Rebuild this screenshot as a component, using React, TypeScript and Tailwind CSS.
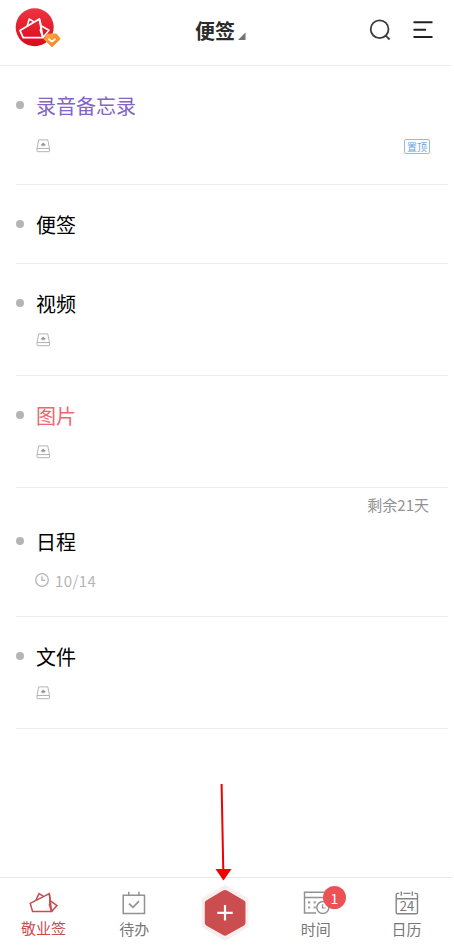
import React from "react";

function DiskIcon() {
  return (
    <svg width="15" height="14" viewBox="0 0 15 14" fill="none" stroke="#b4b4b4" strokeWidth="1">
      <path d="M2.7 .9H11.8L13.5 9.6V11.9Q13.5 12.7 12.7 12.7H1.8Q1 12.7 1 11.9V9.6Z" strokeLinejoin="round" />
      <path d="M1 9.5H13.5" />
      <path d="M7.2 3.4L10 6.2H4.4Z" fill="#999" stroke="none" />
      <path d="M5.8 6H8.6V7.2H5.8Z" fill="#a8a8a8" stroke="none" />
    </svg>
  );
}

function Avatar() {
  return (
    <svg width="48" height="42" viewBox="0 0 48 42" fill="none">
      <defs>
        <linearGradient id="red" x1="0" y1="0" x2="0" y2="1">
          <stop offset="0" stopColor="#ee3440" />
          <stop offset="1" stopColor="#d90a1c" />
        </linearGradient>
        <linearGradient id="gold" x1="0" y1="0" x2="1" y2="1">
          <stop offset="0" stopColor="#ffae3c" />
          <stop offset="1" stopColor="#f47b20" />
        </linearGradient>
      </defs>
      <circle cx="19.7" cy="19.3" r="19" fill="url(#red)" />
      <path d="M5 22.6L24.3 11L28 29.6H8.2Z" stroke="#fff" strokeWidth="1.8" strokeLinejoin="round" />
      <path d="M12.2 18L14.2 11L19 13.9M24.3 11Q26.8 17 25.4 22.5L28 29.6M26.5 18L34 22.3L28 29.6" stroke="#fff" strokeWidth="1.6" strokeLinejoin="round" />
      <path d="M32.5 26H41.5L45.2 31L37 38.8L28.8 31Z" fill="url(#gold)" stroke="#f99a35" strokeLinejoin="round" />
      <path d="M34 31.2L37 33.6L40 31.2" stroke="#fff" strokeWidth="1.8" strokeLinecap="round" strokeLinejoin="round" />
    </svg>
  );
}

function Header() {
  return (
    <header className="flex h-[66px] w-[451px] border-b border-[#ececec] pl-[15px]">
      <div className="w-[180px] pt-2"><Avatar /></div>
      <div className="flex w-[174px] pt-4">
        <h1 className="text-[20px] font-bold leading-[29px] text-[#2b2b2b]">便签</h1>
        <svg className="ml-[3px] mt-4" width="8" height="8" viewBox="0 0 8 8"><path d="M7.5 .5V8H0Z" fill="#737373" /></svg>
      </div>
      <svg className="mt-[18px]" width="23" height="23" viewBox="0 0 23 23" fill="none" stroke="#3c3c3c" strokeWidth="1.8">
        <circle cx="10.6" cy="11.2" r="8.9" /><path d="M16.4 17.4L20.6 21.5" />
      </svg>
      <svg className="ml-[21px] mt-[20px]" width="20" height="20" viewBox="0 0 20 20" stroke="#222" strokeWidth="2">
        <path d="M.5 2.2H19.5M.5 9.8H13M.5 17H19.5" />
      </svg>
    </header>
  );
}

function Note({ title, size, color = "text-black", pinned = false, disk = true, note, date }: {
  title: string; size: string; color?: string; pinned?: boolean; disk?: boolean; note?: string; date?: string;
}) {
  return (
    <li className={`ml-[16px] w-[432px] border-b border-[#eeeeee] ${size}`}>
      {note ? (
        <div className="h-[39px] pr-[19px] pt-[6px] text-right text-[15px] leading-[22px] text-[#929292]">{note}</div>
      ) : (
        <div className="h-[25px]" />
      )}
      <div className="flex h-[30px] items-center">
        <span className="mb-[2px] -ml-[0.5px] h-2 w-2 rounded-full bg-[#b5b5b5]" />
        <span className={`ml-[12.5px] text-[20px] leading-[30px] ${color}`}>{title}</span>
      </div>
      {date && (
        <div className="mt-[13px] flex h-[22px] items-center pl-[19px] text-[15px] text-[#b5b5b5]">
          <svg className="mb-[2px]" width="14" height="14" viewBox="0 0 14 14" fill="none" stroke="#b5b5b5" strokeWidth="1.3">
            <circle cx="7" cy="7" r="6.3" /><path d="M7 3.2V7.3H10.2" />
          </svg>
          <span className="ml-[6px] leading-[22px] tracking-[0.4px]">{date}</span>
        </div>
      )}
      {disk && (
        <div className={`flex h-[14px] items-center justify-between pl-[20px] pr-[18px] ${pinned ? "mt-[18px]" : "mt-[14px]"}`}>
          <DiskIcon />
          {pinned && (
            <span className="flex h-[15px] w-[26px] shrink-0 items-center justify-center rounded-[2px] border border-[#8fbce4] text-[10px] leading-[13px] text-[#68a5dc]">置顶</span>
          )}
        </div>
      )}
    </li>
  );
}

function LogoTab() {
  return (
    <svg width="30" height="26" viewBox="0 0 30 26" fill="none" stroke="#c94b4e" strokeWidth="1.5" strokeLinejoin="miter">
      <path d="M1.2 13.3L20.3 3.6L22.6 21.6H3.6Z" />
      <path d="M7 10L10 3.6L14.2 6.2M20.3 3.6Q21.7 11 20.4 14.8L22.6 21.6M21.9 11.2L28 15.6L22.6 21.6" />
    </svg>
  );
}

function TodoIcon() {
  return (
    <svg width="24" height="26" viewBox="0 0 24 26" fill="none" stroke="#929292" strokeWidth="1.5">
      <path d="M1.2 5.2H22.5V23.6H1.2ZM6.8 1.8V5.4M17 1.8V5.4" />
      <path d="M7 13.6L11 17.4L17 11.2" strokeWidth="1.7" />
    </svg>
  );
}

function TimeIcon() {
  return (
    <svg width="28" height="26" viewBox="0 0 28 26" fill="none" stroke="#929292" strokeWidth="1.5">
      <path d="M14 22.9H2.5V2.2H24V12M2.5 7.4H24" />
      <g fill="#a0a0a0" stroke="none">
        <path d="M6 11.2h2.2v2.2H6zM11.6 11.2h2.2v2.2h-2.2zM6 16.4h2.2v2.2H6zM11.6 16.4h2.2v2.2h-2.2z" />
      </g>
      <circle cx="20.8" cy="17.6" r="6" fill="white" />
      <path d="M20.6 14.2V18H23.6" strokeWidth="1.2" />
    </svg>
  );
}

function CalendarIcon() {
  return (
    <svg width="24" height="26" viewBox="0 0 24 26" fill="none" stroke="#858585" strokeWidth="1.4">
      <path d="M4.2 3.4H2.5Q1.2 3.4 1.2 4.7V22.4Q1.2 23.7 2.5 23.7H21.2Q22.5 23.7 22.5 22.4V4.7Q22.5 3.4 21.2 3.4H19.4M8.3 3.4H15.4M1.2 8.8H22.5" />
      <path d="M6.3 1.4V5.7M17.3 1.4V5.7" />
      <text x="11.9" y="21" textAnchor="middle" fontSize="13" fill="#777" stroke="none">24</text>
    </svg>
  );
}

function Tab({ label, active = false, children }: { label: string; active?: boolean; children: React.ReactNode }) {
  return (
    <div className="flex w-[91px] flex-col items-center pt-[12px]">
      <div className="relative flex h-[26px] items-center">{children}</div>
      <span className={`text-[15px] leading-[22px] ${active ? "mt-px text-[#c94b4e]" : "mt-[2px] text-[#777777]"}`}>{label}</span>
    </div>
  );
}

export default function App() {
  return (
    <div className="relative flex h-[945px] w-[454px] flex-col overflow-hidden bg-white font-['Noto_Sans_CJK_SC','Noto_Sans',sans-serif]">
      <Header />
      <ul>
        <Note title="录音备忘录" size="h-[119px]" color="text-[#8464c4]" pinned />
        <Note title="便签" size="h-[79px]" disk={false} />
        <Note title="视频" size="h-[112px]" />
        <Note title="图片" size="h-[112px]" color="text-[#ee6670]" />
        <Note title="日程" size="h-[129px]" disk={false} note="剩余21天" date="10/14" />
        <Note title="文件" size="h-[112px]" />
      </ul>
      <nav className="mt-auto flex h-[68px] w-[452px] border-t border-[#e8e8e8]">
        <div className="-ml-[2px] flex"><Tab label="敬业签" active><LogoTab /></Tab></div>
        <Tab label="待办"><TodoIcon /></Tab>
        <div className="flex w-[91px] justify-center pt-[7px]">
          <svg width="50" height="56" viewBox="0 0 50 56">
            <path d="M25 0L48.5 13.5V42L25 56L1.5 42V13.5Z" fill="#f7eeee" />
            <path d="M23 5.6Q25 4.4 27 5.6L44 15.5Q45.5 16.4 45.5 18V38Q45.5 39.5 44 40.4L27 50.1Q25 51.2 23 50.1L6.2 40.4Q4.8 39.5 4.8 38V18Q4.8 16.4 6.2 15.5Z" fill="#cb4d50" />
            <path d="M17.3 27.8H32.7M25 20.1V35.5" stroke="white" strokeWidth="2.2" />
          </svg>
        </div>
        <Tab label="时间">
          <TimeIcon />
          <span className="absolute left-[21px] top-[-4px] flex h-[23px] w-[23px] items-center justify-center rounded-full bg-[#ec5255] text-[14px] leading-none text-white">1</span>
        </Tab>
        <Tab label="日历"><CalendarIcon /></Tab>
      </nav>
      <svg className="absolute left-[210px] top-[780px]" width="26" height="104" viewBox="0 0 26 104">
        <path d="M11.6 4L13.3 91" stroke="#f00000" strokeWidth="2" />
        <path d="M5.5 89H21.5L13.5 100.5Z" fill="#f00000" />
      </svg>
    </div>
  );
}
